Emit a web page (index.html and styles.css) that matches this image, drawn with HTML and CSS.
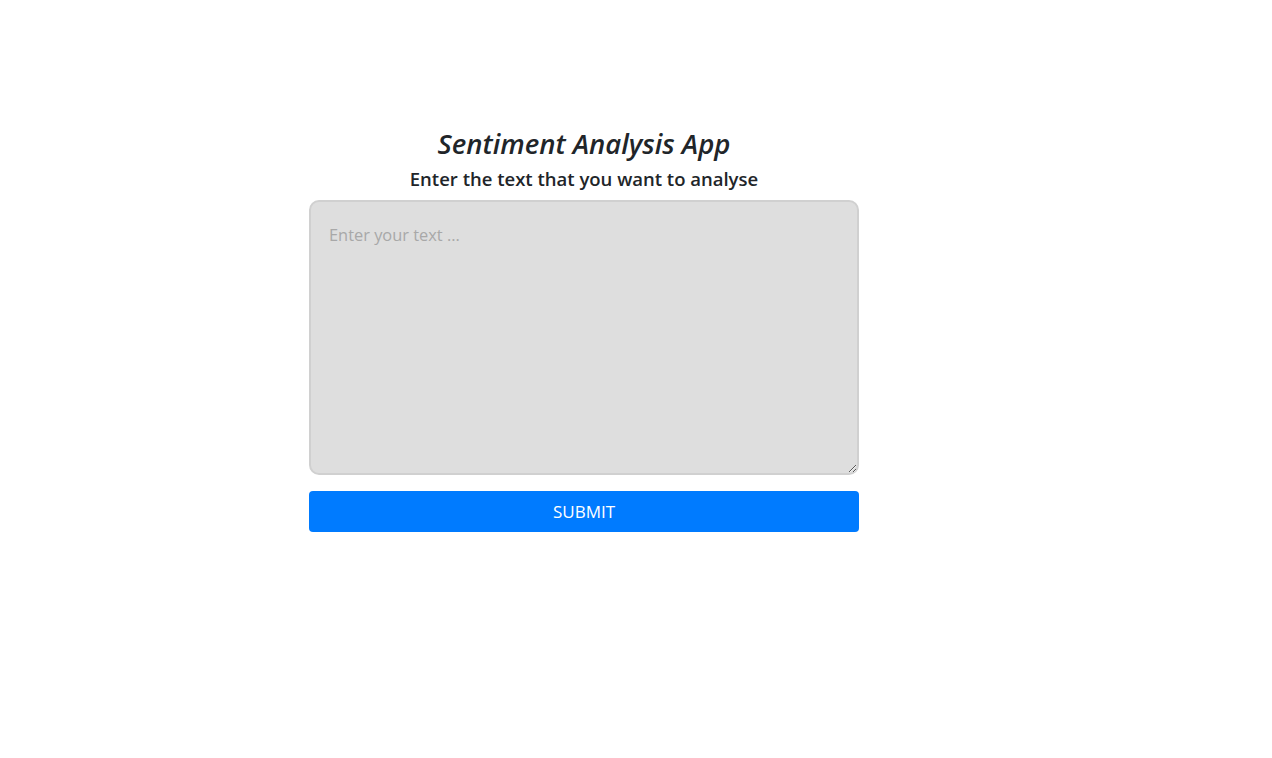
FILE: index.html
```html
<!DOCTYPE html>
<html>
<head>
<meta charset="utf-8">
<link rel="stylesheet" href="styles.css">
</head>
<body>
<main class="app">
  <h1 class="title">Sentiment Analysis App</h1>
  <p class="subtitle">Enter the text that you want to analyse</p>
  <textarea class="input" placeholder="Enter your text ..."></textarea>
  <button class="submit">SUBMIT</button>
</main>
</body>
</html>
```
FILE: styles.css
```css
html, body {
  margin: 0;
  padding: 0;
  background: #fff;
}
body {
  font-family: "Open Sans", "Noto Sans", sans-serif;
  color: #212529;
}
.app {
  width: 550px;
  margin-left: 309px;
  padding-top: 124px;
  display: flex;
  flex-direction: column;
  align-items: stretch;
}
.title {
  margin: 0;
  text-align: center;
  font-style: italic;
  font-weight: 600;
  font-size: 27.5px;
  line-height: 40px;
}
.subtitle {
  margin: 0 0 6px;
  text-align: center;
  font-weight: 600;
  font-size: 18.5px;
  line-height: 30px;
}
.input {
  box-sizing: border-box;
  height: 275px;
  width: 100%;
  background: #dedede;
  border: 2px solid #d0d0d0;
  border-radius: 10px;
  padding: 21px 18px;
  font-family: inherit;
  font-size: 16.4px;
  color: #212529;
  resize: vertical;
  outline: none;
}
.input::placeholder {
  color: #a8a8a8;
}
.submit {
  margin-top: 16px;
  height: 41px;
  border: none;
  border-radius: 4px;
  background: #007bff;
  color: #fff;
  font-family: inherit;
  font-size: 17px;
  cursor: pointer;
}
```
